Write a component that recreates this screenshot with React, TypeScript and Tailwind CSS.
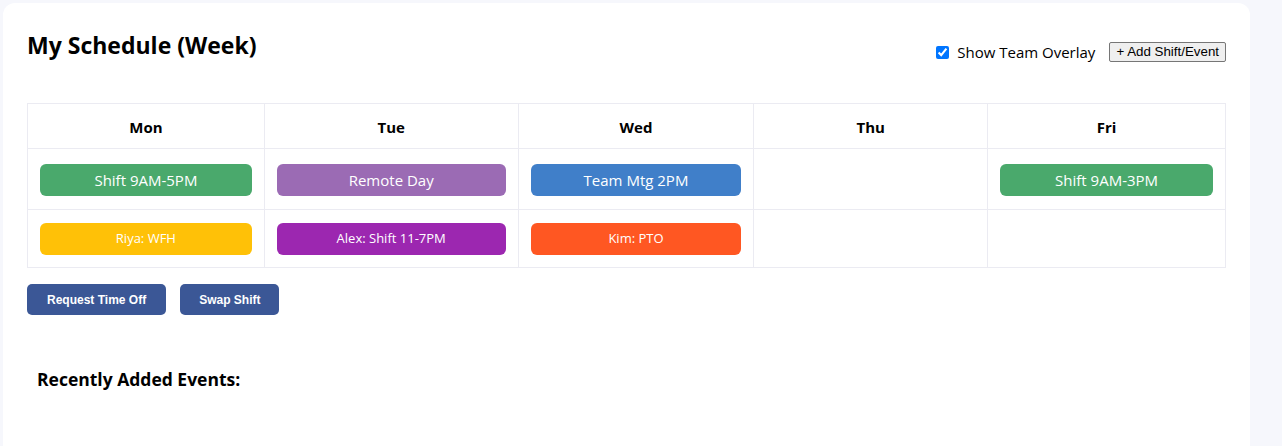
import React from "react";

const sans = { fontFamily: '"Open Sans", "Noto Sans", sans-serif' };

type Ev = { text: string; color: string };

const days = ["Mon", "Tue", "Wed", "Thu", "Fri"];
const widths = ["w-[237px]", "w-[254px]", "w-[236px]", "w-[234px]", "w-[238px]"];

const row1: (Ev | null)[] = [
  { text: "Shift 9AM-5PM", color: "bg-[#4aa96c]" },
  { text: "Remote Day", color: "bg-[#9b6bb4]" },
  { text: "Team Mtg 2PM", color: "bg-[#407fc9]" },
  null,
  { text: "Shift 9AM-3PM", color: "bg-[#4aa96c]" },
];

const row2: (Ev | null)[] = [
  { text: "Riya: WFH", color: "bg-[#ffc107]" },
  { text: "Alex: Shift 11-7PM", color: "bg-[#9c27b0]" },
  { text: "Kim: PTO", color: "bg-[#ff5722]" },
  null,
  null,
];

export default function App() {
  return (
    <div className="min-h-[446px] bg-[#f6f7fc] pt-[3px] pl-[3px]" style={sans}>
      <div className="w-[1247px] min-h-[460px] rounded-[12px] bg-white px-6 pt-6 text-black">
        <div className="flex items-start justify-between">
          <h2 className="pt-[3px] text-[23px] font-bold leading-[30px]">My Schedule (Week)</h2>
          <div className="flex items-center pt-[15px]">
            <input type="checkbox" defaultChecked className="m-0 h-[13px] w-[13px] accent-[#0075ff]" />
            <span className="ml-[8px] text-[15px] leading-[20px]">Show Team Overlay</span>
            <button
              className="ml-[14px] h-[20px] rounded-[2px] border border-[#767676] bg-[#efefef] px-[6px] text-[13.33px] leading-[16px] text-black"
              style={{ fontFamily: '"Liberation Sans", Arial, sans-serif' }}
            >
              + Add Shift/Event
            </button>
          </div>
        </div>

        <table className="mt-[41px] border-collapse">
          <thead>
            <tr>
              {days.map((d, i) => (
                <th
                  key={d}
                  className={`${widths[i]} h-[45px] border border-[#ebebf2] p-0 pt-[2px] text-center text-[15px] font-bold`}
                >
                  {d}
                </th>
              ))}
            </tr>
          </thead>
          <tbody>
            <tr>
              {row1.map((e, i) => (
                <td key={i} className="h-[61px] border border-[#ebebf2] px-[12px] pt-[2px] align-middle">
                  {e && (
                    <div
                      className={`${e.color} flex h-[32px] items-center justify-center rounded-[6px] text-[15px] text-white`}
                    >
                      {e.text}
                    </div>
                  )}
                </td>
              ))}
            </tr>
            <tr>
              {row2.map((e, i) => (
                <td key={i} className="h-[58px] border border-[#ebebf2] px-[12px] align-middle">
                  {e && (
                    <div
                      className={`${e.color} flex h-[32px] items-center justify-center rounded-[6px] text-[13px] text-white`}
                    >
                      {e.text}
                    </div>
                  )}
                </td>
              ))}
            </tr>
          </tbody>
        </table>

        <div className="mt-[16px] flex gap-[14px]" style={{ fontFamily: '"Liberation Sans", Arial, sans-serif' }}>
          <button className="h-[31px] rounded-[5px] bg-[#3b5796] px-[20px] text-[12px] font-bold text-white">
            Request Time Off
          </button>
          <button className="h-[31px] rounded-[5px] bg-[#3b5796] px-[19px] text-[12px] font-bold text-white">
            Swap Shift
          </button>
        </div>

        <h3 className="mt-[52px] pl-[10px] text-[17.5px] font-bold leading-[24px]">Recently Added Events:</h3>
      </div>
    </div>
  );
}
